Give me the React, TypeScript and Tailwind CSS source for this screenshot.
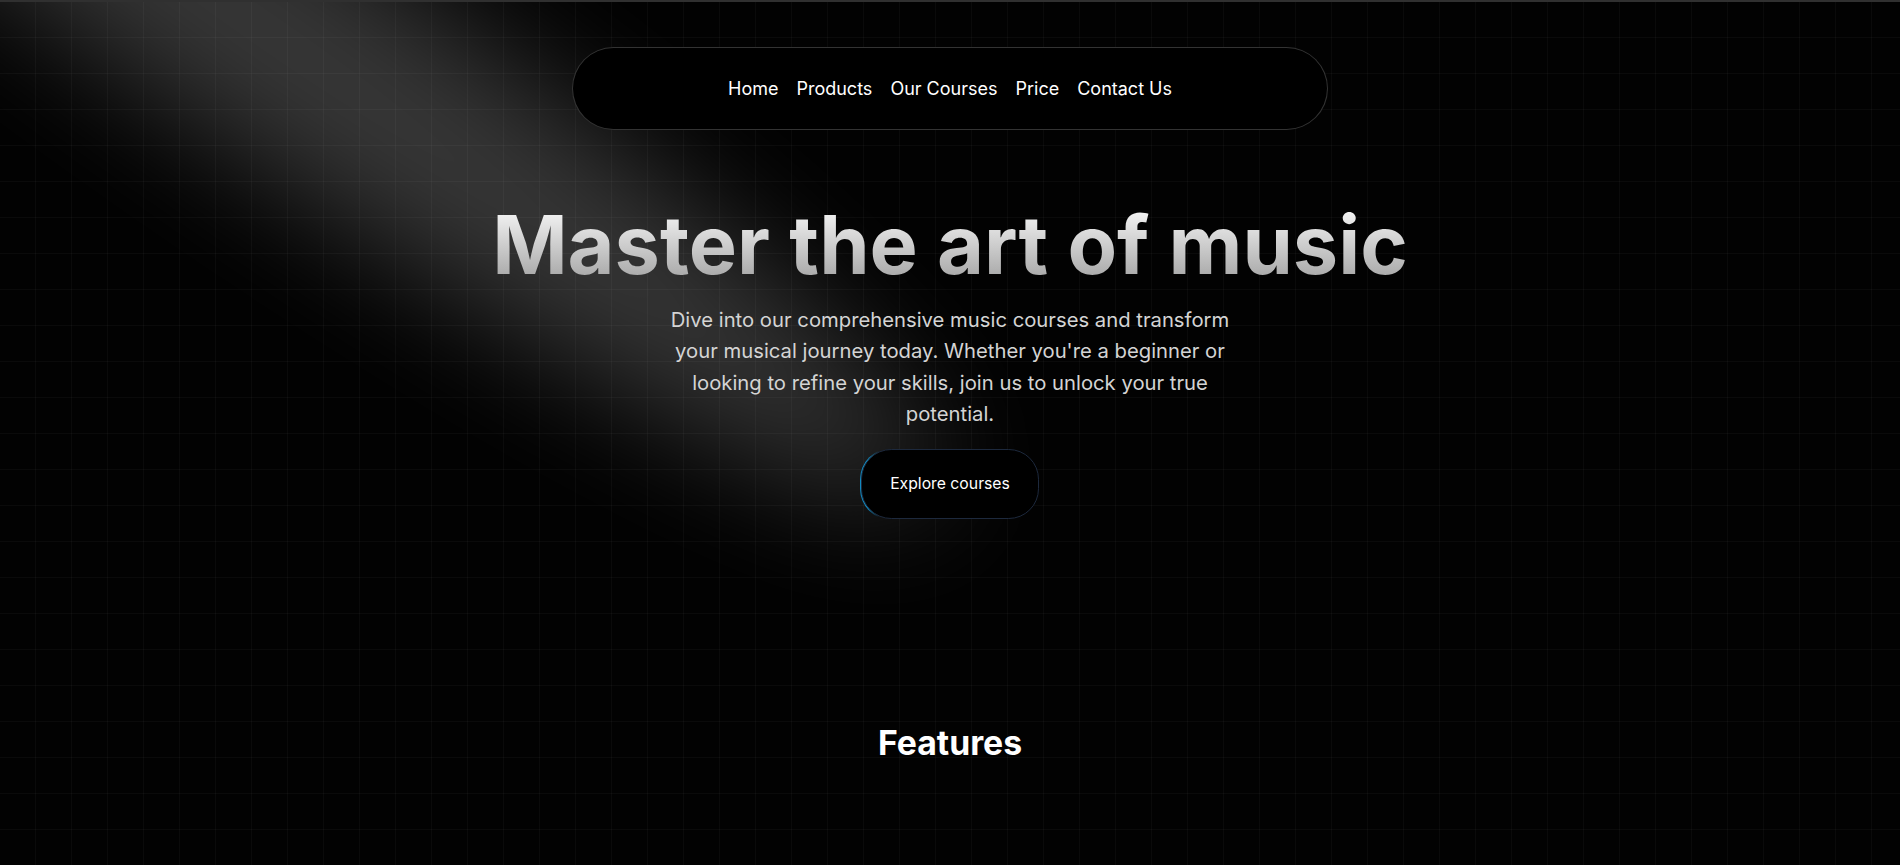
import React from "react";

const links = ["Home", "Products", "Our Courses", "Price", "Contact Us"];

const Spotlight = () => (
  <svg
    className="pointer-events-none absolute z-[1] left-[-528px] top-[-577px] w-[1596px] h-[1217px]"
    viewBox="0 0 3787 2842"
    fill="none"
  >
    <g filter="url(#spot)">
      <ellipse
        cx="1924.71"
        cy="273.501"
        rx="1924.71"
        ry="273.501"
        transform="matrix(-0.822377 -0.568943 -0.568943 0.822377 3631.88 2291.09)"
        fill="white"
        fillOpacity="0.21"
      />
    </g>
    <defs>
      <filter
        id="spot"
        x="0.860352"
        y="0.838989"
        width="3785.16"
        height="2840.26"
        filterUnits="userSpaceOnUse"
        colorInterpolationFilters="sRGB"
      >
        <feFlood floodOpacity="0" result="BackgroundImageFix" />
        <feBlend mode="normal" in="SourceGraphic" in2="BackgroundImageFix" result="shape" />
        <feGaussianBlur stdDeviation="151" result="blur" />
      </filter>
    </defs>
  </svg>
);

const Navbar = () => (
  <div className="absolute top-[45px] inset-x-0 max-w-[756px] mx-auto z-50">
    <nav className="rounded-full border border-white/[0.2] bg-black flex justify-center gap-[18px] px-[36px] py-[27px]">
      {links.map((l) => (
        <p key={l} className="cursor-pointer text-white text-[18px] leading-[27px]">
          {l}
        </p>
      ))}
    </nav>
  </div>
);

const MovingButton = ({ children }: { children: React.ReactNode }) => (
  <button className="relative h-[72px] w-[180px] p-[1px] overflow-hidden rounded-[31.5px] bg-transparent">
    <div className="absolute inset-0 rounded-[31.5px]">
      <div className="absolute left-[-45px] top-[-9px] h-[90px] w-[90px] opacity-80 bg-[radial-gradient(#0ea5e9_40%,transparent_60%)]" />
    </div>
    <div className="relative flex items-center justify-center w-full h-full rounded-[30.24px] bg-black border border-slate-800 text-white text-[15.75px] antialiased">
      {children}
    </div>
  </button>
);

export default function App() {
  return (
    <div className="min-h-screen bg-[#020202] font-['Inter',sans-serif] antialiased">
      <div className="h-[2px] bg-[#303030]" />
      <main className="relative min-h-[863px] bg-[linear-gradient(to_right,transparent_35px,rgba(255,255,255,0.03)_35px),linear-gradient(to_bottom,transparent_35px,rgba(255,255,255,0.03)_35px)] bg-[size:36px_36px]">
        <Navbar />
        <section className="relative h-[720px] w-full flex flex-col items-center justify-center overflow-hidden">
          <Spotlight />
          <div className="relative z-10 w-full p-[18px] text-center">
            <h1 className="text-[81px] leading-none font-bold bg-clip-text text-transparent bg-gradient-to-b from-neutral-50 to-neutral-400">
              Master the art of music
            </h1>
            <p className="mt-[18px] max-w-[576px] mx-auto text-[20.25px] leading-[31.5px] text-neutral-300">
              Dive into our comprehensive music courses and transform your
              musical journey today. Whether you're a beginner or looking to
              refine your skills, join us to unlock your true potential.
            </p>
            <div className="mt-[18px]">
              <MovingButton>Explore courses</MovingButton>
            </div>
          </div>
        </section>
        <section className="pt-px text-center">
          <h2 className="text-[33.75px] leading-[40.5px] font-bold text-white">Features</h2>
        </section>
      </main>
    </div>
  );
}
